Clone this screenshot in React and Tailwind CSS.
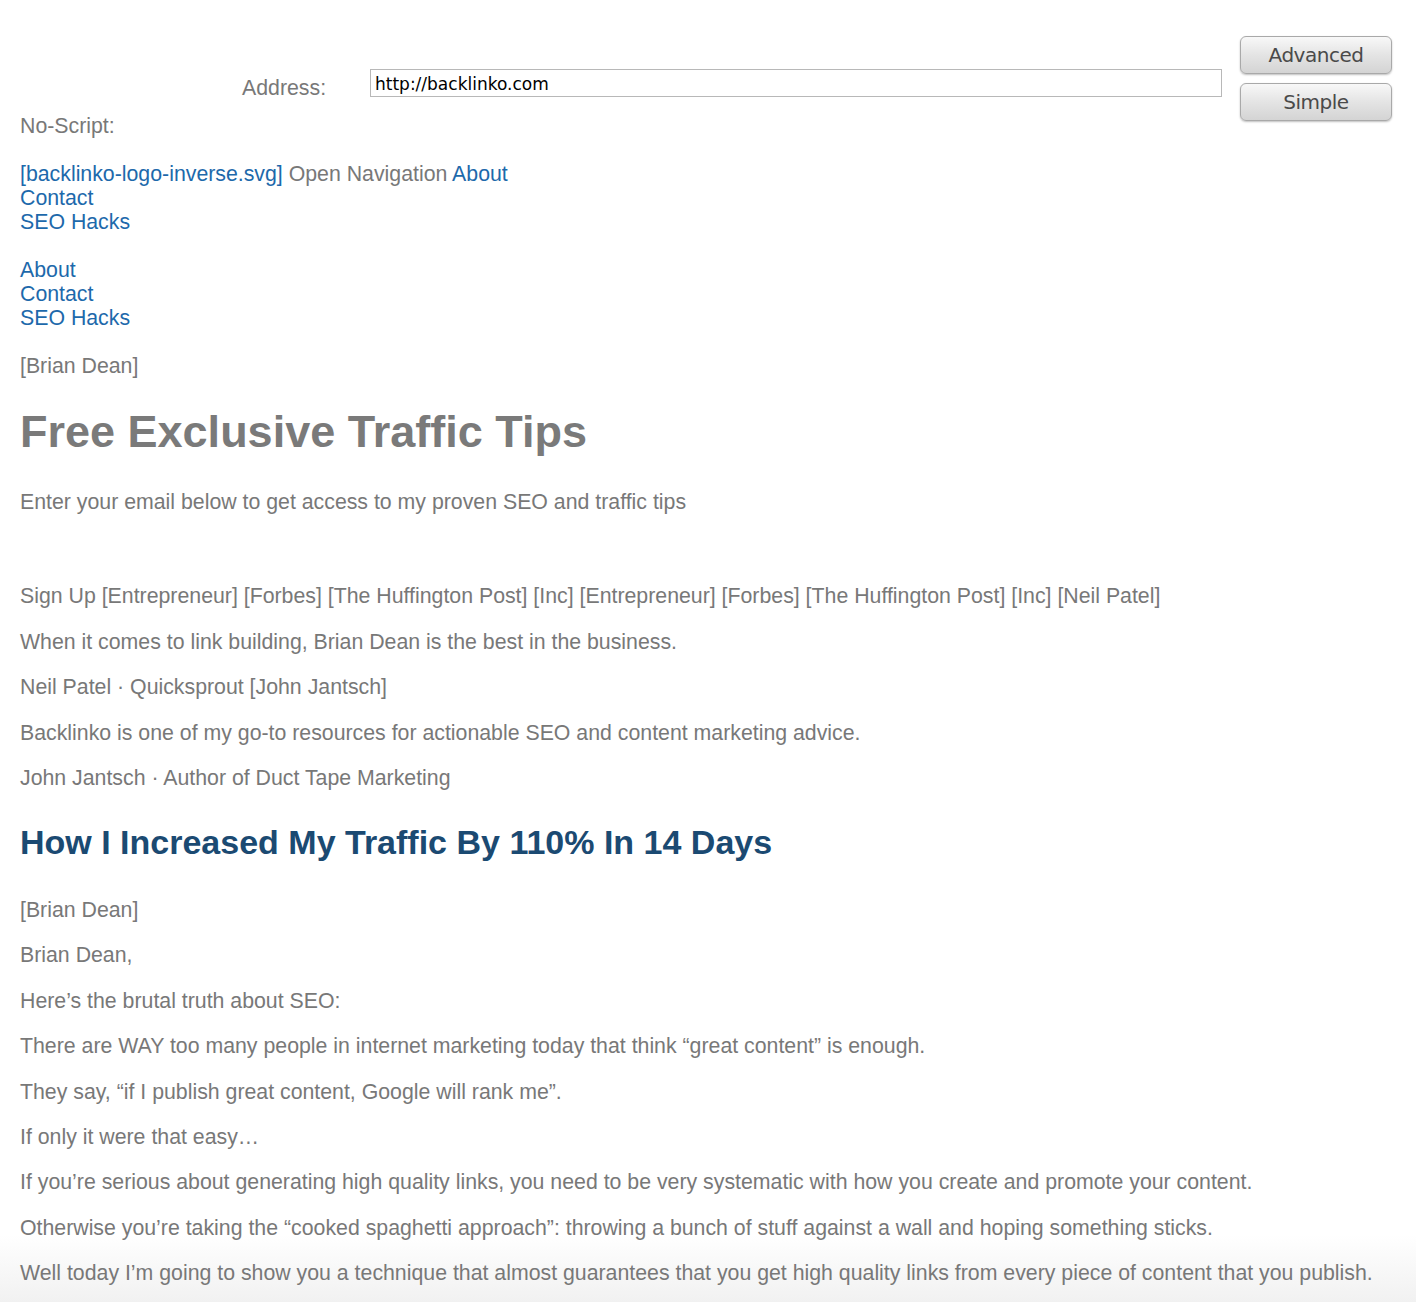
export default function App() {
  const gray = "text-[#787878]";
  const link = "text-[#1d69ab]";
  const paras1 = [
    "When it comes to link building, Brian Dean is the best in the business.",
    "Neil Patel · Quicksprout [John Jantsch]",
    "Backlinko is one of my go-to resources for actionable SEO and content marketing advice.",
    "John Jantsch · Author of Duct Tape Marketing",
  ];
  const paras2 = [
    "Brian Dean,",
    "Here’s the brutal truth about SEO:",
    "There are WAY too many people in internet marketing today that think “great content” is enough.",
    "They say, “if I publish great content, Google will rank me”.",
    "If only it were that easy…",
    "If you’re serious about generating high quality links, you need to be very systematic with how you create and promote your content.",
    "Otherwise you’re taking the “cooked spaghetti approach”: throwing a bunch of stuff against a wall and hoping something sticks.",
    "Well today I’m going to show you a technique that almost guarantees that you get high quality links from every piece of content that you publish.",
  ];
  const btn =
    "w-[152px] h-[38px] rounded-[6px] border border-[#a9a9a9] bg-[linear-gradient(#f8f8f8,#e4e4e4_50%,#d4d4d4)] shadow-[0_1px_2px_rgba(0,0,0,0.25)] text-[20px] text-[#4a4a4a] flex items-center justify-center font-['DejaVu_Sans',sans-serif] tracking-[-0.5px]";
  return (
    <div className="h-[1302px] overflow-hidden bg-[linear-gradient(to_bottom,#ffffff_0,#ffffff_1235px,#f1f1f1_1302px)] font-['Liberation_Sans',Arial,sans-serif] text-[21.3px] leading-[24px] pt-[36px]">
      <div className="flex items-start h-[78px] pl-[242px]">
        <div className={`w-[128px] mt-[40px] ${gray} leading-[24px]`}>Address:</div>
        <div className="w-[852px] h-[28px] mt-[33px] border border-[#b8b8b8] bg-white flex items-center pl-[4px] pt-[2px] text-black text-[17px] font-['DejaVu_Sans',sans-serif]">
          http://backlinko.com
        </div>
        <div className="ml-[18px] flex flex-col gap-[9px]">
          <div className={btn}>Advanced</div>
          <div className={`${btn} h-[37px]`}>Simple</div>
        </div>
      </div>

      <div className={`px-[20px] ${gray}`}>
        <p>No-Script:</p>
        <div className="mt-[24px]">
          <div>
            <span className={link}>[backlinko-logo-inverse.svg]</span> Open Navigation{" "}
            <span className={link}>About</span>
          </div>
          <div className={link}>Contact</div>
          <div className={link}>SEO Hacks</div>
        </div>
        <div className="mt-[24px]">
          <div className={link}>About</div>
          <div className={link}>Contact</div>
          <div className={link}>SEO Hacks</div>
        </div>
        <p className="mt-[24px]">[Brian Dean]</p>
        <h1 className="mt-[28px] text-[45px] leading-[52px] font-bold text-[#7a7a7a]">
          Free Exclusive Traffic Tips
        </h1>
        <p className="mt-[32px]">Enter your email below to get access to my proven SEO and traffic tips</p>
        <p className="mt-[70px]">
          Sign Up [Entrepreneur] [Forbes] [The Huffington Post] [Inc] [Entrepreneur] [Forbes] [The Huffington Post] [Inc] [Neil Patel]
        </p>
        {paras1.map((t) => (
          <p key={t} className="mt-[21.5px]">
            {t}
          </p>
        ))}
        <h2 className="mt-[32px] text-[34px] leading-[40px] font-bold text-[#1b4a72]">
          How I Increased My Traffic By 110% In 14 Days
        </h2>
        <p className="mt-[36px]">[Brian Dean]</p>
        {paras2.map((t) => (
          <p key={t} className="mt-[21.4px]">
            {t}
          </p>
        ))}
      </div>
    </div>
  );
}
